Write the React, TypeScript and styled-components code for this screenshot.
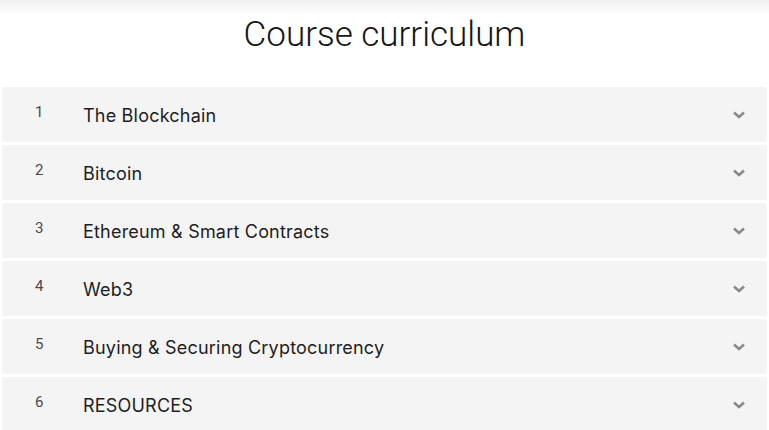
import styled, { createGlobalStyle } from "styled-components";

const GlobalStyle = createGlobalStyle`
    html, body {
        margin: 0;
        padding: 0;
        background: #ffffff;
        font-family: Roboto, "Liberation Sans", sans-serif;
    }
`;

const Page = styled.div`
    width: 769px;
    height: 430px;
    overflow: hidden;
    background: linear-gradient(to bottom, #f0f0f0 0px, #ffffff 16px);
`;

const Title = styled.h2`
    margin: 0;
    height: 87px;
    padding-top: 14px;
    box-sizing: border-box;
    text-align: center;
    font-size: 35px;
    font-weight: 300;
    color: #151515;
    line-height: 42px;
`;

const List = styled.div`
    display: flex;
    flex-direction: column;
    gap: 3px;
    padding: 0 2px;
`;

const Row = styled.div`
    height: 55px;
    background: #f4f4f4;
    border-radius: 2px;
    display: flex;
    align-items: center;
    padding: 0 21px 0 0;
`;

const Num = styled.span`
    width: 81px;
    box-sizing: border-box;
    padding-left: 33px;
    font-size: 15px;
    color: #4a4a4a;
    margin-top: -5px;
`;

const Label = styled.span`
    flex: 1;
    font-family: Inter, Roboto, sans-serif;
    font-size: 18px;
    letter-spacing: 0.2px;
    color: #1e1e1e;
    margin-top: 2px;
`;

function Chevron() {
    return (
        <svg width="14" height="10" viewBox="0 0 14 10">
            <polyline
                points="2,2.5 7,7 12,2.5"
                fill="none"
                stroke="#8a8a8a"
                strokeWidth="2.6"
            />
        </svg>
    );
}

const items = [
    "The Blockchain",
    "Bitcoin",
    "Ethereum & Smart Contracts",
    "Web3",
    "Buying & Securing Cryptocurrency",
    "RESOURCES",
];

export default function App() {
    return (
        <Page>
            <GlobalStyle />
            <Title>Course curriculum</Title>
            <List>
                {items.map((label, i) => (
                    <Row key={label}>
                        <Num>{i + 1}</Num>
                        <Label>{label}</Label>
                        <Chevron />
                    </Row>
                ))}
            </List>
        </Page>
    );
}
